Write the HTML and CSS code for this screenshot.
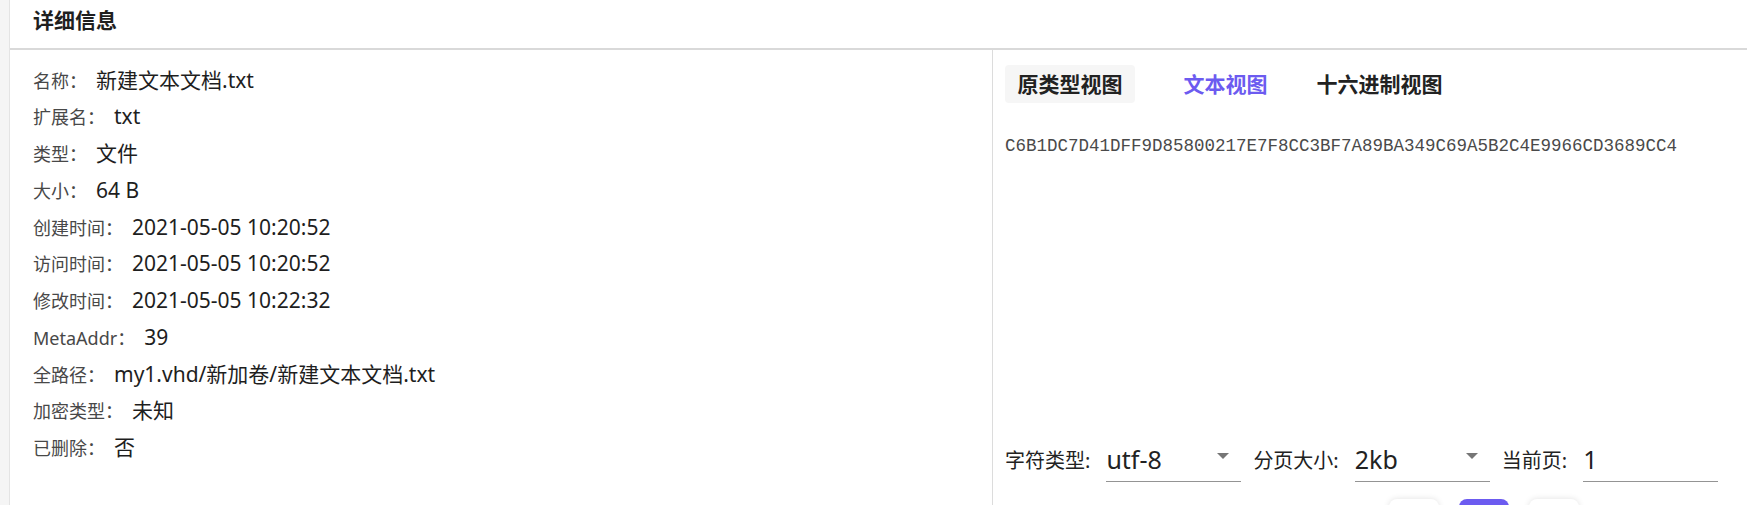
FILE: index.html
```html
<!DOCTYPE html>
<html lang="zh-CN">
<head>
<meta charset="utf-8">
<title>详细信息</title>
<link rel="stylesheet" href="styles.css">
</head>
<body>
<div class="page">
  <div class="card">
    <div class="card-header"><span class="title">详细信息</span></div>
    <div class="card-body">
      <div class="info">
        <div class="row"><span class="k">名称：</span><span class="v">新建文本文档.txt</span></div>
        <div class="row"><span class="k">扩展名：</span><span class="v">txt</span></div>
        <div class="row"><span class="k">类型：</span><span class="v">文件</span></div>
        <div class="row"><span class="k">大小：</span><span class="v">64 B</span></div>
        <div class="row"><span class="k">创建时间：</span><span class="v">2021-05-05 10:20:52</span></div>
        <div class="row"><span class="k">访问时间：</span><span class="v">2021-05-05 10:20:52</span></div>
        <div class="row"><span class="k">修改时间：</span><span class="v">2021-05-05 10:22:32</span></div>
        <div class="row"><span class="k">MetaAddr：</span><span class="v">39</span></div>
        <div class="row"><span class="k">全路径：</span><span class="v">my1.vhd/新加卷/新建文本文档.txt</span></div>
        <div class="row"><span class="k">加密类型：</span><span class="v">未知</span></div>
        <div class="row"><span class="k">已删除：</span><span class="v">否</span></div>
      </div>
      <div class="viewer">
        <div class="tabs">
          <div class="tab tab-plain">原类型视图</div>
          <div class="tab tab-active">文本视图</div>
          <div class="tab">十六进制视图</div>
        </div>
        <div class="content">C6B1DC7D41DFF9D85800217E7F8CC3BF7A89BA349C69A5B2C4E9966CD3689CC4</div>
        <div class="controls">
          <span class="ctl-label">字符类型:</span>
          <div class="select"><span class="sel-value">utf-8</span><svg class="caret" width="12" height="6" viewBox="0 0 12 6"><polygon points="0,0 12,0 6,6" fill="#767676"/></svg></div>
          <span class="ctl-label">分页大小:</span>
          <div class="select"><span class="sel-value">2kb</span><svg class="caret" width="12" height="6" viewBox="0 0 12 6"><polygon points="0,0 12,0 6,6" fill="#767676"/></svg></div>
          <span class="ctl-label">当前页:</span>
          <div class="select select-input"><span class="sel-value">1</span></div>
        </div>
        <div class="pager">
          <div class="pg-btn" aria-label="上一页"><svg width="16" height="16" viewBox="0 0 16 16"><path d="M10 3 5 8l5 5" fill="none" stroke="#555" stroke-width="1.6"/></svg></div>
          <div class="pg-btn pg-active" aria-label="第1页"></div>
          <div class="pg-btn" aria-label="下一页"><svg width="16" height="16" viewBox="0 0 16 16"><path d="M6 3l5 5-5 5" fill="none" stroke="#555" stroke-width="1.6"/></svg></div>
        </div>
      </div>
    </div>
  </div>
</div>
</body>
</html>
```

FILE: styles.css
```css
html, body {
  margin: 0;
  padding: 0;
  overflow: hidden;
  background: #ffffff;
  font-family: "Noto Sans", "Noto Sans CJK SC", sans-serif;
}

.page {
  display: flex;
  background: #f5f5f5;
  padding-left: 9px;
  min-height: 100vh;
}

.card {
  flex: 1;
  background: #ffffff;
  border-left: 1px solid #e4e4e4;
}

.card-header {
  height: 48px;
  border-bottom: 2px solid #d9d9d9;
  padding-left: 23px;
  display: flex;
  align-items: flex-start;
}

.title {
  font-size: 21px;
  font-weight: 700;
  line-height: 40px;
  color: #1f1f1f;
}

.card-body {
  display: grid;
  grid-template-columns: 983px 1fr;
}

.info {
  border-right: 1px solid #dcdcdc;
  padding: 11.6px 0 60px 23px;
}

.row {
  display: flex;
  align-items: baseline;
  height: 36.75px;
  line-height: 36.75px;
}

.k {
  font-size: 18px;
  color: #484848;
  margin-right: 9px;
}

.v {
  font-size: 21px;
  color: #1e1e1e;
}

.viewer {
  padding: 15px 0 0 12px;
  display: flex;
  flex-direction: column;
}

.tabs {
  display: flex;
  align-items: center;
  height: 38px;
}

.tab {
  font-size: 21px;
  font-weight: 700;
  height: 38px;
  line-height: 38px;
  padding: 0 12.5px;
  border-radius: 4px;
  color: #222222;
}

.tab-plain {
  background: #f6f6f6;
}

.tab-active {
  color: #6c5bf0;
  margin-left: 36px;
  margin-right: 24px;
}

.content {
  margin-top: 31px;
  height: 302px;
  font-family: "Liberation Mono", monospace;
  font-size: 17.5px;
  line-height: 24px;
  color: #4a4a4a;
}

.controls {
  display: flex;
  align-items: center;
  height: 46px;
}

.ctl-label {
  font-size: 20px;
  color: #222222;
  margin-right: 16px;
  white-space: nowrap;
}

.select {
  width: 135px;
  height: 46px;
  box-sizing: border-box;
  border-bottom: 1px solid #949494;
  display: flex;
  align-items: center;
  justify-content: space-between;
  margin-right: 12px;
  flex: none;
}

.sel-value {
  font-size: 25px;
  color: #222222;
}

.caret {
  margin-right: 12px;
  margin-bottom: 6px;
}

.pager {
  display: flex;
  gap: 20px;
  margin-top: 17px;
  padding-left: 384px;
}

.pg-btn {
  width: 50px;
  height: 50px;
  border-radius: 8px;
  background: #ffffff;
  box-shadow: 0 0 6px rgba(0, 0, 0, 0.12);
  display: flex;
  align-items: center;
  justify-content: center;
}

.pg-active {
  background: #6c5bf0;
  box-shadow: none;
}
```
